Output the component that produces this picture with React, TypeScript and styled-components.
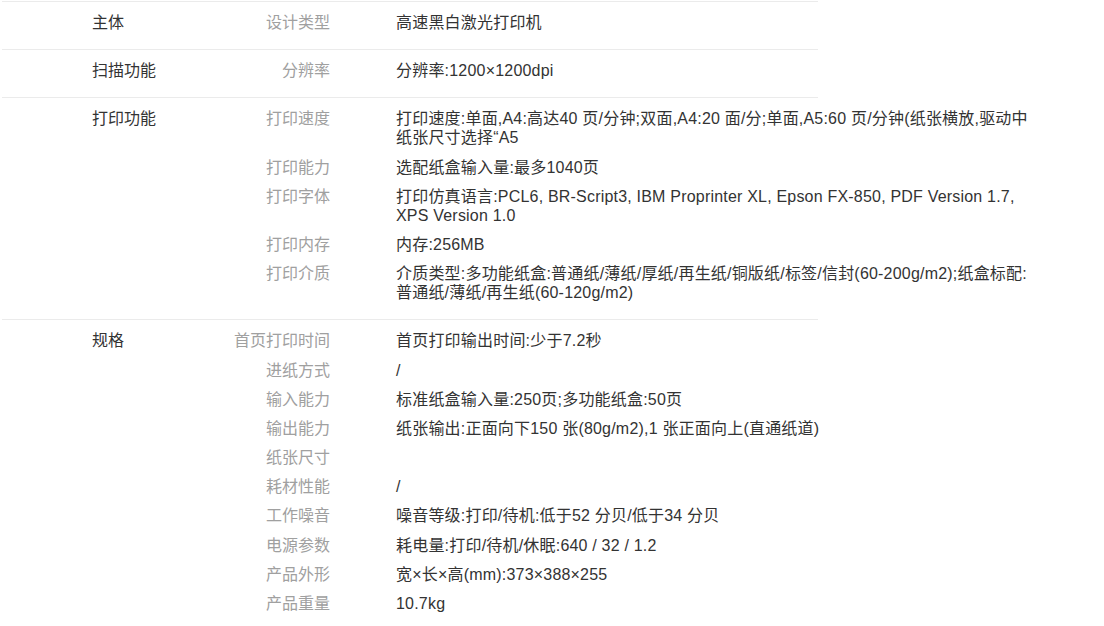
import React from "react";
import styled, { createGlobalStyle } from "styled-components";

const GlobalStyle = createGlobalStyle`
  html, body {
    margin: 0;
    padding: 0;
    background: #fff;
  }
  body {
    font-family: "Liberation Sans", "Noto Sans CJK SC", sans-serif;
    font-size: 16px;
    color: #333;
  }
`;

const Page = styled.div`
  padding: 1px 0 0 2px;
`;

const SpecTable = styled.div`
  width: 816px;
`;

const Group = styled.section`
  display: flex;
  border-top: 1px solid #ebebeb;
  padding: 11px 0 7px;
`;

const GroupName = styled.div`
  width: 198px;
  flex-shrink: 0;
  padding-left: 90px;
  box-sizing: border-box;
  line-height: 19px;
  color: #333;
`;

const Rows = styled.div`
  display: flex;
  flex-direction: column;
`;

const Row = styled.div`
  display: flex;
  align-items: flex-start;
  margin-bottom: 10.2px;
  line-height: 19px;
`;

const Label = styled.div`
  width: 130px;
  flex-shrink: 0;
  text-align: right;
  color: #a0a0a0;
`;

const Value = styled.div`
  width: 640px;
  flex-shrink: 0;
  margin-left: 66px;
  color: #333;
  min-height: 19px;
  letter-spacing: 0.2px;
`;

type Spec = { group: string; items: [string, string][] };

const specs: Spec[] = [
  { group: "主体", items: [["设计类型", "高速黑白激光打印机"]] },
  { group: "扫描功能", items: [["分辨率", "分辨率:1200×1200dpi"]] },
  {
    group: "打印功能",
    items: [
      [
        "打印速度",
        "打印速度:单面,A4:高达40 页/分钟;双面,A4:20 面/分;单面,A5:60 页/分钟(纸张横放,驱动中纸张尺寸选择“A5",
      ],
      ["打印能力", "选配纸盒输入量:最多1040页"],
      [
        "打印字体",
        "打印仿真语言:PCL6, BR-Script3, IBM Proprinter XL, Epson FX-850, PDF Version 1.7, XPS Version 1.0",
      ],
      ["打印内存", "内存:256MB"],
      [
        "打印介质",
        "介质类型:多功能纸盒:普通纸/薄纸/厚纸/再生纸/铜版纸/标签/信封(60-200g/m2);纸盒标配:普通纸/薄纸/再生纸(60-120g/m2)",
      ],
    ],
  },
  {
    group: "规格",
    items: [
      ["首页打印时间", "首页打印输出时间:少于7.2秒"],
      ["进纸方式", "/"],
      ["输入能力", "标准纸盒输入量:250页;多功能纸盒:50页"],
      ["输出能力", "纸张输出:正面向下150 张(80g/m2),1 张正面向上(直通纸道)"],
      ["纸张尺寸", ""],
      ["耗材性能", "/"],
      ["工作噪音", "噪音等级:打印/待机:低于52 分贝/低于34 分贝"],
      ["电源参数", "耗电量:打印/待机/休眠:640 / 32 / 1.2"],
      ["产品外形", "宽×长×高(mm):373×388×255"],
      ["产品重量", "10.7kg"],
    ],
  },
];

export default function App() {
  return (
    <>
      <GlobalStyle />
      <Page>
        <SpecTable>
          {specs.map((spec) => (
            <Group key={spec.group}>
              <GroupName>{spec.group}</GroupName>
              <Rows>
                {spec.items.map(([label, value]) => (
                  <Row key={label}>
                    <Label>{label}</Label>
                    <Value>{value}</Value>
                  </Row>
                ))}
              </Rows>
            </Group>
          ))}
        </SpecTable>
      </Page>
    </>
  );
}
